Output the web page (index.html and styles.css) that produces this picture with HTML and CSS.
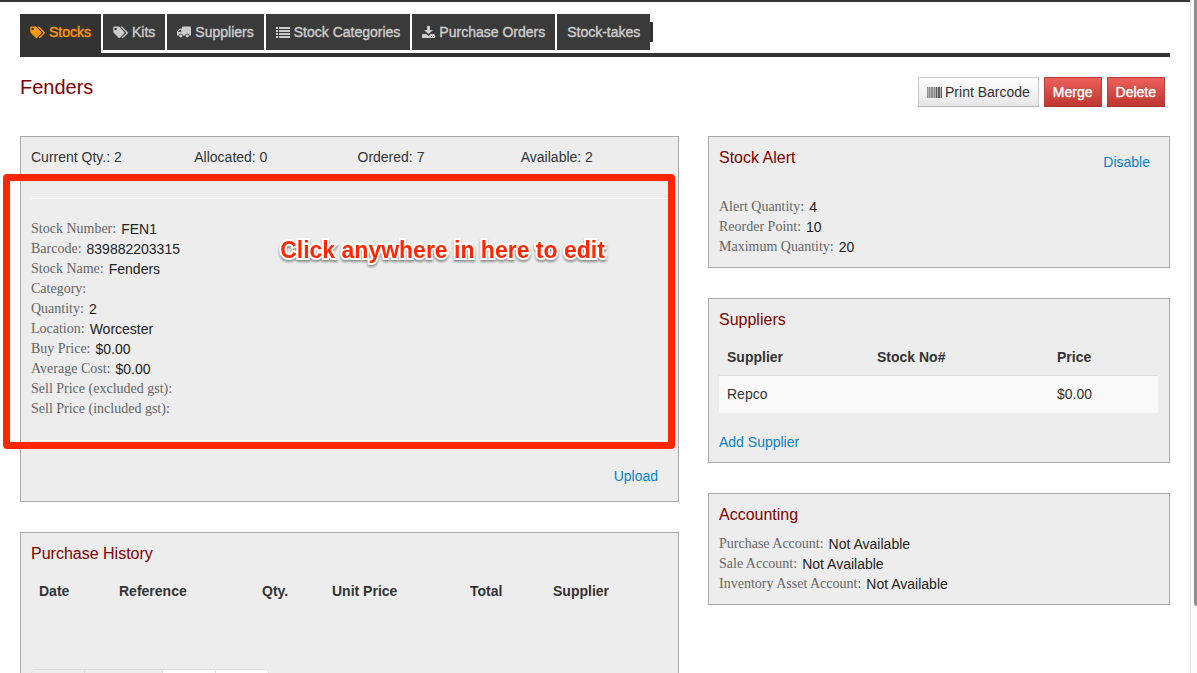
FILE: index.html
```html
<!DOCTYPE html>
<html lang="en">
<head>
<meta charset="utf-8">
<meta name="viewport" content="width=device-width, initial-scale=1">
<title>Stocks - Fenders</title>
<link rel="stylesheet" href="styles.css">
</head>
<body>
<svg class="symbols" aria-hidden="true">
  <symbol id="tags" viewBox="0 0 15 13">
    <path fill-rule="evenodd" d="M1 .5h4.600l1 .4 4.600 5c.5.5.5 1 0 1.600L7.100 11.800c-.5.5-1 .5-1.500 0L.7 6.700.3 5.700V1.200C.3.700.6.500 1 .5zM2.600 1.700a1.200 1.200 0 1 0 0 2.400 1.200 1.200 0 0 0 0-2.400z"/>
    <path d="M7.300.5h1.300l1 .4 5 5c.5.5.5 1 0 1.600l-4.300 4.300c-.6.5-1.100.5-1.700-.2l4.200-4.100c.5-.6.5-1.100 0-1.600z"/>
  </symbol>
  <symbol id="truck" viewBox="0 0 14 12">
    <path fill-rule="evenodd" d="M5 1.300c0-.5.300-.8.800-.8h7.400c.5 0 .8.300.8.800V9.500h-1.800a2 2 0 0 0-4 0H5.800a2 2 0 0 0-4 0H0V5.700l.3-.8 2-2 .8-.3H5zM1.300 5.600v.5h2.900V3.800H3z"/>
    <circle cx="3.800" cy="9.800" r="1.600"/><circle cx="10.200" cy="9.800" r="1.600"/>
  </symbol>
  <symbol id="list" viewBox="0 0 14 11">
    <path d="M0 0h2v2H0zM3 0h11v2H3zM0 3h2v2H0zM3 3h11v2H3zM0 6h2v2H0zM3 6h11v2H3zM0 9h2v2H0zM3 9h11v2H3z"/>
  </symbol>
  <symbol id="download" viewBox="0 0 13 12">
    <path fill-rule="evenodd" d="M5 0h3v4h3L6.500 8 2 4h3zM.5 8h3.700l2.300 2 2.300-2h3.700l.5.500V12H0V8.500zM9 10v1h1v-1zM11 10v1h1v-1z"/>
  </symbol>
  <symbol id="barcode" viewBox="0 0 15 11">
    <path opacity=".5" d="M0 0h1v11H0zM2 0h1v11H2zM4 0h2v11H4zM7 0h1v11H7z"/>
    <path opacity=".35" d="M1 0h1v11H1zM3 0h1v11H3zM6 0h1v11H6zM8 0h7v11H8z"/>
    <path opacity=".65" d="M9 0h1v11H9zM11 0h2v11H11zM14 0h1v11H14z"/>
  </symbol>
</svg>

<div class="page">
  <div class="content">
    <nav class="tabs" aria-label="Stock sections">
      <a class="tab active" href="#"><svg class="i-tags" aria-hidden="true"><use href="#tags"/></svg>Stocks</a>
      <a class="tab" href="#"><svg class="i-tags" aria-hidden="true"><use href="#tags"/></svg>Kits</a>
      <a class="tab" href="#"><svg class="i-truck" aria-hidden="true"><use href="#truck"/></svg>Suppliers</a>
      <a class="tab" href="#"><svg class="i-list" aria-hidden="true"><use href="#list"/></svg>Stock Categories</a>
      <a class="tab" href="#"><svg class="i-download" aria-hidden="true"><use href="#download"/></svg>Purchase Orders</a>
      <a class="tab last" href="#">Stock-takes</a>
    </nav>

    <header class="title-row">
      <h1>Fenders</h1>
      <div class="actions">
        <button class="btn" type="button"><svg class="i-barcode" aria-hidden="true"><use href="#barcode"/></svg>Print Barcode</button>
        <button class="btn danger" type="button">Merge</button>
        <button class="btn danger" type="button">Delete</button>
      </div>
    </header>

    <main class="columns">
      <div class="column">
        <section class="panel stock">
          <div class="totals">
            <span>Current Qty.: 2</span><span>Allocated: 0</span><span>Ordered: 7</span><span>Available: 2</span>
          </div>
          <div class="editable">
            <dl class="fields">
              <div><dt>Stock Number:</dt><dd>FEN1</dd></div>
              <div><dt>Barcode:</dt><dd>839882203315</dd></div>
              <div><dt>Stock Name:</dt><dd>Fenders</dd></div>
              <div><dt>Category:</dt><dd></dd></div>
              <div><dt>Quantity:</dt><dd>2</dd></div>
              <div><dt>Location:</dt><dd>Worcester</dd></div>
              <div><dt>Buy Price:</dt><dd>$0.00</dd></div>
              <div><dt>Average Cost:</dt><dd>$0.00</dd></div>
              <div><dt>Sell Price (excluded gst):</dt><dd></dd></div>
              <div><dt>Sell Price (included gst):</dt><dd></dd></div>
            </dl>
            <div class="callout"><strong>Click anywhere in here to edit</strong></div>
          </div>
          <div class="upload"><a href="#">Upload</a></div>
        </section>

        <section class="panel history">
          <h2>Purchase History</h2>
          <table>
            <colgroup><col class="h-date"><col class="h-ref"><col class="h-qty"><col class="h-unit"><col class="h-total"><col></colgroup>
            <thead><tr><th>Date</th><th>Reference</th><th>Qty.</th><th>Unit Price</th><th>Total</th><th>Supplier</th></tr></thead>
          </table>
          <div class="pager"><span class="off first"></span><span class="off prev"></span><span></span><span></span></div>
        </section>
      </div>

      <div class="column">
        <section class="panel alert">
          <div class="panel-head"><h2>Stock Alert</h2><a href="#">Disable</a></div>
          <dl class="fields">
            <div><dt>Alert Quantity:</dt><dd>4</dd></div>
            <div><dt>Reorder Point:</dt><dd>10</dd></div>
            <div><dt>Maximum Quantity:</dt><dd>20</dd></div>
          </dl>
        </section>

        <section class="panel suppliers">
          <h2>Suppliers</h2>
          <table>
            <colgroup><col class="s-name"><col class="s-number"><col></colgroup>
            <thead><tr><th>Supplier</th><th>Stock No#</th><th>Price</th></tr></thead>
            <tbody><tr><td>Repco</td><td></td><td>$0.00</td></tr></tbody>
          </table>
          <a href="#">Add Supplier</a>
        </section>

        <section class="panel accounting">
          <h2>Accounting</h2>
          <dl class="fields">
            <div><dt>Purchase Account:</dt><dd>Not Available</dd></div>
            <div><dt>Sale Account:</dt><dd>Not Available</dd></div>
            <div><dt>Inventory Asset Account:</dt><dd>Not Available</dd></div>
          </dl>
        </section>
      </div>
    </main>
  </div>
  <div class="scroll-track" aria-hidden="true"><div class="scroll-thumb"></div></div>
</div>
</body>
</html>
```
FILE: styles.css
```css
* { box-sizing: border-box; }

body {
  margin: 0;
  background: #fff;
  color: #333;
  font: 14px/20px "Liberation Sans", Arial, sans-serif;
}

h1, h2, dl, dd { margin: 0; }
h1, h2 { font-weight: 400; color: #800000; }
h1 { font-size: 20px; line-height: 20px; }
h2 { font-size: 16px; line-height: 22px; }
a { color: #0a7fcf; text-decoration: none; }
.symbols { display: none; }

.page { display: flex; height: 100vh; overflow: hidden; }

.content {
  flex: 1;
  min-width: 0;
  border-top: 2px solid #363435;
  padding: 12px 20px 0;
}

/* Section tabs */
.tabs {
  display: flex;
  align-items: flex-start;
  gap: 2px;
  border-bottom: 4px solid #333;
}

.tab {
  display: flex;
  align-items: center;
  gap: 4px;
  height: 36px;
  margin-bottom: 3px;
  padding: 0 10px;
  background: #3a3a3a;
  color: #ccc;
  white-space: nowrap;
  -webkit-text-stroke: 0.4px currentColor;
}

.tab.active { height: 39px; margin-bottom: 0; padding-bottom: 3px; background: #333; color: #f90; }
.tab.last { position: relative; }
.tab.last::after {
  content: "";
  position: absolute;
  left: 100%;
  top: 8px;
  width: 3px;
  height: 20px;
  background: #333;
}

svg { flex: none; fill: currentColor; }
.i-tags { width: 15px; height: 13px; }
.i-truck { width: 14px; height: 12px; }
.i-list { width: 14px; height: 11px; }
.i-download { width: 13px; height: 12px; }
.i-barcode { width: 15px; height: 11px; }

/* Page title and actions */
.title-row {
  display: flex;
  justify-content: space-between;
  padding: 20px 5px 29px 0;
}

.actions { display: flex; gap: 5px; }

.btn {
  display: flex;
  align-items: center;
  gap: 3px;
  height: 30px;
  padding: 0 8px;
  border: 1px solid #c8c8c8;
  border-bottom-color: #b3b3b3;
  background: linear-gradient(#fff, #e6e6e6);
  color: #333;
  font: inherit;
}

.btn.danger {
  border-color: #b5403b #b5403b #a33431;
  background: linear-gradient(#ee5f5b, #bd362f);
  color: #fff;
  text-shadow: 0 -1px 0 rgba(0, 0, 0, 0.25);
  -webkit-text-stroke: 0.4px currentColor;
}

/* Panels */
.columns { display: grid; grid-template-columns: 659fr 462fr; gap: 29px; }
.column { display: flex; flex-direction: column; gap: 30px; min-width: 0; }
.panel { border: 1px solid #a9a9a9; background: #ededed; padding: 10px; }

.totals { display: grid; grid-template-columns: repeat(4, 1fr); margin-right: -16px; }

.editable {
  position: relative;
  margin-top: 31px;
  padding: 20px 0 21px;
  border-top: 1px solid #fff;
  border-bottom: 1px solid #fff;
}

.callout {
  position: absolute;
  inset: -25px -7px -9px -28px;
  border: 7px solid #ff2600;
  border-radius: 4px;
  display: flex;
  justify-content: center;
  padding: 57px 0 0 207px;
  color: #ff2600;
  font-size: 23px;
  line-height: 24px;
  white-space: nowrap;
}

.callout strong {
  paint-order: stroke fill;
  -webkit-text-stroke: 4px #fff;
  filter: drop-shadow(0 2px 1px rgba(0, 0, 0, 0.4));
}

.upload { padding: 25px 10px 5px 0; text-align: right; }

.fields > div { display: flex; gap: 5px; height: 20px; }
.fields dt { color: #666; font-family: "Liberation Serif", "Times New Roman", serif; }
.fields dd { color: #222; }

/* Tables */
table { width: 100%; border-collapse: collapse; table-layout: fixed; text-align: left; }
th, td { padding: 8px; line-height: 20px; }
td { height: 37px; border-top: 1px solid #ddd; background: #f9f9f9; }

.history { padding-bottom: 40px; }
.history table { margin-top: 8px; }
.h-date { width: 80px; }
.h-ref { width: 143px; }
.h-qty { width: 70px; }
.h-unit { width: 138px; }
.h-total { width: 83px; }

.pager { display: flex; width: 238px; height: 30px; margin-top: 60px; border: 1px solid #ddd; border-radius: 4px; overflow: hidden; }
.pager span { flex: 1; background: #fff; border-left: 1px solid #ddd; }
.pager .off { background: #ededed; }
.pager .first { border-left: 0; }
.pager .prev { flex: 0 0 78px; }

.panel-head { display: flex; justify-content: space-between; padding-right: 9px; }
.panel-head a { padding-top: 5px; }
.alert .fields { padding-top: 25px; }
.suppliers table { margin-top: 8px; margin-bottom: 19px; width: calc(100% - 1px); }
.s-name { width: 150px; }
.s-number { width: 180px; }
.accounting h2 { margin-bottom: 8px; }

/* Window scrollbar */
.scroll-track { flex: none; width: 7px; padding-left: 3px; background: #fafafa; border-left: 1px solid #e6e6e6; }
.scroll-thumb { height: 90%; background: #909090; border-bottom-left-radius: 3px; }
```
